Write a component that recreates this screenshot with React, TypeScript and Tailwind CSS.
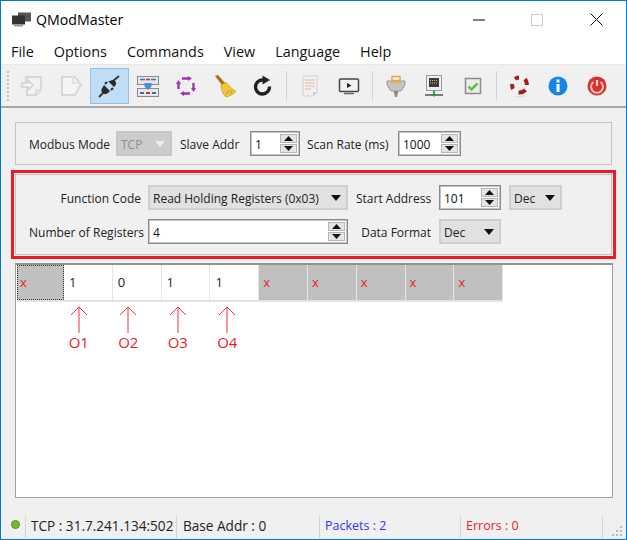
import React from "react";

const Down = ({ c = "#111" }: { c?: string }) => (
  <svg width="10" height="6" viewBox="0 0 10 6"><path d="M0 0h10L5 6z" fill={c} /></svg>
);

function Combo({ text, w, disabled }: { text: string; w: string; disabled?: boolean }) {
  return (
    <div className={`${w} h-[25px] flex items-center justify-between pl-[3px] pr-[5px] border-2 ${disabled ? "border-[#c6c6c6] bg-[#cccccc] text-[#8f8f8f]" : "border-[#cfcfcf] bg-[#e1e1e1] text-[#222]"}`}>
      <span className="whitespace-nowrap pt-[2px]">{text}</span>
      <Down c={disabled ? "#eeeeee" : "#111"} />
    </div>
  );
}

function Spin({ text, w }: { text: string; w: string }) {
  return (
    <div className={`${w} h-[25px] flex items-stretch border border-[#8a8a8a] bg-white text-[#111] shadow-[inset_0_0_0_1px_#c4c4c4]`}>
      <span className="flex-1 pl-[4px] pt-[2px] self-center">{text}</span>
      <div className="w-[17px] flex flex-col m-[2px] ml-0 gap-[1px]">
        <div className="flex-1 bg-[#e4e4e4] border border-[#b5b5b5] flex items-center justify-center">
          <svg width="9" height="5" viewBox="0 0 9 5"><path d="M4.5 0L9 5H0z" fill="#111" /></svg>
        </div>
        <div className="flex-1 bg-[#e4e4e4] border border-[#b5b5b5] flex items-center justify-center">
          <svg width="9" height="5" viewBox="0 0 9 5"><path d="M0 0h9L4.5 5z" fill="#111" /></svg>
        </div>
      </div>
    </div>
  );
}

const I = ({ children }: { children: React.ReactNode }) => (
  <svg width="24" height="24" viewBox="0 0 24 24">{children}</svg>
);

const icons: React.ReactNode[] = [
  <I key="0"><path d="M6 9V3h15v13l-5 5H7v-6" fill="#f2f2f2" stroke="#d8d8d8" strokeWidth="2" /><path d="M16 21v-5h5" fill="#e8e8e8" stroke="#d8d8d8" strokeWidth="1.500" /><path d="M2 9h6V6l5 5-5 5v-3H2z" fill="#f6f6f6" stroke="#cfcfcf" strokeWidth="1.500" /></I>,
  <I key="1"><path d="M3 3h13l6 8-6 10H3z" fill="#f4f4f4" stroke="#d8d8d8" strokeWidth="2" /><path d="M14 3v6h6" fill="none" stroke="#e0e0e0" strokeWidth="1.500" /></I>,
  <I key="2"><path d="M2 23l6-6M16 7l6-5" stroke="#333" strokeWidth="1.800" /><path d="M7 11l6 6-2 2c-2 1.500-4 1.500-5.500 0s-1.500-3.500 0-5.500z" fill="#2b2b2b" /><path d="M11 7l6 6 1-1c1.500-2 1.500-3.500 0-5s-3-1.500-5 0z" fill="#2b2b2b" /><path d="M8 10l2-2M14 16l2-2" stroke="#2b2b2b" strokeWidth="2" /></I>,
  <I key="3"><rect x="1.500" y="2.500" width="21" height="8" fill="#e6e6e6" stroke="#8a8a8a" /><rect x="1.500" y="14.500" width="21" height="8" fill="#e6e6e6" stroke="#8a8a8a" /><path d="M4 5.500h5M15 5.500h5" stroke="#3b6fc4" strokeWidth="1.600" /><path d="M10 5.500h4" stroke="#d8322c" strokeWidth="1.600" /><path d="M4 19h4M16 19h4" stroke="#3b6fc4" strokeWidth="2" /><path d="M10 19h4" stroke="#d8322c" strokeWidth="2" /><path d="M8.500 9h7v3.500l-3.500 3.500-3.500-3.500z" fill="#4a90d9" /></I>,
  <I key="4"><path d="M8 4.500h7M19.500 9v6M16 19.500H9M4.500 15V9" stroke="#a32fb8" strokeWidth="2.400" fill="none" /><path d="M14 2l4 2.500-4 2.500zM22 14l-2.500 4-2.500-4zM10 22l-4-2.500 4-2.500zM2 10l2.500-4 2.500 4z" fill="#a32fb8" /></I>,
  <I key="5"><path d="M2 2l3-1 7 8-3 2z" fill="#b06a1c" /><path d="M8 11l5-2.500c3 3 6 7 10 9-3 3-7 5-10 5.500-3-3-5-7-5-12z" fill="#f0c832" stroke="#c89a1c" strokeWidth="0.800" /><path d="M13 21l3-5M17 20l2-4" stroke="#c89a1c" /></I>,
  <I key="6"><path d="M18.500 12.500A7 7 0 1 1 12 6" fill="none" stroke="#222" strokeWidth="3.400" /><path d="M11.500 1.500l7.500 4.500-7.500 4.500z" fill="#222" /></I>,
  null,
  <I key="8"><path d="M5 2h14v16l-4 4H5z" fill="#f4f0ee" stroke="#dcdcdc" strokeWidth="1.500" /><path d="M7 6h10M7 9h10M7 12h10M7 15h6" stroke="#e8b5ab" /><path d="M15 22l4-4h-4z" fill="#cccccc" /></I>,
  <I key="9"><rect x="2.500" y="5" width="19" height="12.500" rx="1" fill="#f2f2f2" stroke="#444" strokeWidth="1.500" /><path d="M10 9l4.500 2.500L10 14z" fill="#222" /><path d="M7 19.500h10" stroke="#666" strokeWidth="1.500" /></I>,
  null,
  <I key="11"><path d="M3 7h18v4l-4 6h-10l-4-6z" fill="#c4c4c4" stroke="#9a9a9a" /><rect x="8" y="2.500" width="8" height="4" fill="none" stroke="#e4a63c" strokeWidth="1.500" /><path d="M6 8.500h12" stroke="#e8b060" strokeWidth="1.500" /><path d="M9.500 17h5L13 23h-2z" fill="#8d8d8d" /></I>,
  <I key="12"><rect x="4.500" y="1.500" width="15" height="15" fill="#eeeeee" stroke="#9a9a9a" /><rect x="7" y="4" width="10" height="9" fill="#3b3b3b" /><path d="M8 6.500h8M8 9h8" stroke="#d8b65a" strokeDasharray="1 1" /><path d="M3 21h18" stroke="#555" strokeWidth="1.500" /><path d="M12 17v3" stroke="#2f9e3f" strokeWidth="2" /><path d="M9.500 20h5L12 23z" fill="#2f9e3f" /></I>,
  <I key="13"><rect x="4.500" y="4.500" width="15" height="15" fill="#ececec" stroke="#8c8c8c" strokeWidth="1.500" /><path d="M7.500 12.500l3 3L16.500 9.500" fill="none" stroke="#63c23c" strokeWidth="2.500" /></I>,
  null,
  <I key="15"><circle cx="12" cy="11" r="7.500" fill="none" stroke="#f4f4f4" strokeWidth="5" /><path d="M7 5A8 8 0 0 1 11 3.500M17 5a9 9 0 0 1 2 6M17.500 16a9 9 0 0 1-7 2.500M5 15a8 8 0 0 1-.800-5" fill="none" stroke="#a81c1c" strokeWidth="4" /><path d="M6 22.500h12" stroke="#dcdcdc" /></I>,
  <I key="16"><circle cx="12" cy="12" r="9.500" fill="#1585e8" /><rect x="10.500" y="10" width="3" height="8" fill="#fff" /><rect x="10.500" y="5.500" width="3" height="3" fill="#fff" /></I>,
  <I key="17"><circle cx="12" cy="12" r="9.500" fill="#d9302c" /><path d="M8.500 8a6 6 0 1 0 7 0" fill="none" stroke="#f6c8c4" strokeWidth="2" /><path d="M12 6v6" stroke="#f6c8c4" strokeWidth="2.200" /></I>,
];

const Arrow = () => (
  <svg width="18" height="27" viewBox="0 0 18 27"><path d="M9 27V1M1 9l8-8 8 8" fill="none" stroke="#ed1c24" strokeWidth="0.900" /></svg>
);

export default function App() {
  const font = { fontFamily: '"Open Sans", "Noto Sans", sans-serif' };
  return (
    <div style={font} className="w-[627px] h-[540px] flex flex-col border border-[#0078d7] bg-[#f0f0f0] text-[12px] text-[#222] overflow-hidden">
      <div className="h-[37px] shrink-0 bg-white flex items-center pl-[11px]">
        <svg width="19" height="15" viewBox="0 0 19 15">
          <rect x="6" y="0.500" width="13" height="9" fill="#555" />
          <rect x="0" y="3.500" width="13" height="9" fill="#333" />
          <rect x="2" y="12.500" width="9" height="2" fill="#999" />
        </svg>
        <span className="ml-[5px] text-[14.200px] text-black">QModMaster</span>
        <div className="ml-auto flex items-center pr-[23px]">
          <svg width="12" height="2" viewBox="0 0 12 2"><path d="M0 1h12" stroke="#000" /></svg>
          <div className="ml-[46px] w-[12px] h-[12px] border border-[#cccccc]" />
          <svg className="ml-[47px]" width="13" height="13" viewBox="0 0 13 13"><path d="M0.500 0.500l12 12M12.500 0.500l-12 12" stroke="#111" /></svg>
        </div>
      </div>
      <div className="h-[26px] shrink-0 bg-white flex items-center pl-[10px] pt-[2px] gap-[20px] text-[14.400px] text-[#111]">
        <span>File</span><span>Options</span><span>Commands</span><span>View</span><span>Language</span><span>Help</span>
      </div>
      <div className="h-[44px] shrink-0 flex items-center border-t border-[#e8e8e8] border-b-2 border-b-[#a8a8a8]">
        <div className="w-[12px] pl-[6px] flex flex-col gap-[2px] shrink-0">
          {[0, 1, 2, 3, 4, 5, 6, 7].map((i) => <div key={i} className="w-[2px] h-[2px] bg-[#c0c0c0]" />)}
        </div>
        {icons.map((ic, i) => {
          if (ic === null) return <div key={i} className="w-[8.500px] flex justify-center shrink-0"><div className="w-[1px] h-[30px] bg-[#d4d4d4]" /></div>;
          return (
            <div key={i} className={`w-[38.500px] h-[36px] flex items-center justify-center shrink-0 ${i === 2 ? "bg-[#bfddf5] border border-[#8cc2ee]" : ""}`}>{ic}</div>
          );
        })}
      </div>

      <div className="flex-1 flex flex-col px-[10px] pt-[14px] min-h-0">
        <div className="mx-[4px] h-[43px] shrink-0 border border-[#c4c4c4] flex items-center pl-[13px]">
          <span className="w-[87px] pt-[2px]">Modbus Mode</span>
          <Combo text="TCP" w="w-[56px]" disabled />
          <span className="ml-[8px] w-[70px] pt-[2px]">Slave Addr</span>
          <Spin text="1" w="w-[50px]" />
          <span className="ml-[7px] w-[91px] pt-[2px]">Scan Rate (ms)</span>
          <Spin text="1000" w="w-[63px]" />
        </div>
        <div className="mt-[5px] h-[89px] shrink-0 border-[3px] border-[#ed1c24] p-[1px]">
          <div className="h-full border border-[#c4c4c4] pl-[13px] pt-[10px] grid grid-cols-[119px_208px_83px_70px_53px] grid-rows-[25px_25px] gap-y-[9px] items-center">
            <span className="text-right pr-[7px] pt-[2px] whitespace-nowrap">Function Code</span>
            <Combo text="Read Holding Registers (0x03)" w="w-[200px]" />
            <span className="text-right pr-[8px] pt-[2px] whitespace-nowrap">Start Address</span>
            <Spin text="101" w="w-[62px]" />
            <Combo text="Dec" w="w-[53px]" />
            <span className="text-right pr-[7px] pt-[2px] whitespace-nowrap">Number of Registers</span>
            <Spin text="4" w="w-[200px]" />
            <span className="text-right pr-[8px] pt-[2px] whitespace-nowrap">Data Format</span>
            <Combo text="Dec" w="w-[62px]" />
          </div>
        </div>
        <div className="mt-[4px] ml-[4px] mr-[3px] flex-1 min-h-0 bg-white border border-[#a0a0a0] border-t-2 border-t-[#8f959b] pl-[1px] text-[13px]">
          <div className="flex h-[37px] border-b-2 border-[#e4e4e4] w-fit">
            <div className="w-[47px] bg-[#c0c0c0] border border-dotted border-[#333] text-[#ed1c24] flex items-center pl-[2px]">x</div>
            {["1", "0", "1", "1"].map((v, i) => (
              <div key={i} className="w-[48.800px] border-r border-[#e4e4e4] pl-[5px] flex items-center text-[#222]">{v}</div>
            ))}
            {[0, 1, 2, 3, 4].map((i) => (
              <div key={i} className="w-[48.800px] bg-[#c0c0c0] border-r border-[#e4e4e4] pl-[4px] flex items-center text-[#ed1c24]">x</div>
            ))}
          </div>
          <div className="flex ml-[37px] mt-[4px]">
            {["O1", "O2", "O3", "O4"].map((t) => (
              <div key={t} className="w-[49.500px] flex flex-col items-center text-[#ed1c24] text-[15px] leading-[18px]">
                <Arrow />
                <span>{t}</span>
              </div>
            ))}
          </div>
        </div>
      </div>

      <div className="h-[41px] shrink-0 flex items-center pt-[16px] text-[#222]">
        <div className="w-[24px] flex justify-center pl-[4px] mb-[4px]">
          <div className="w-[9px] h-[9px] rounded-full bg-[#79b82a] border border-[#5f8f20]" />
        </div>
        <div className="h-[22px] w-[151px] border-l border-[#d4d4d4] pl-[5px] flex items-center text-[13.600px] whitespace-nowrap">TCP : 31.7.241.134:502</div>
        <div className="h-[22px] w-[143px] border-l border-[#d4d4d4] pl-[6px] flex items-center text-[13.600px] whitespace-nowrap">Base Addr : 0</div>
        <div className="h-[22px] w-[141px] border-l border-[#d4d4d4] pl-[5px] flex items-center text-[12.500px] text-[#3333ff] whitespace-nowrap">Packets : 2</div>
        <div className="h-[22px] w-[142px] border-l border-[#d4d4d4] pl-[5px] flex items-center text-[12.500px] text-[#ed1c24] whitespace-nowrap">Errors : 0</div>
        <div className="h-[22px] flex-1 border-l border-[#d4d4d4] flex items-end justify-end pr-[3px]">
          <svg width="12" height="12" viewBox="0 0 12 12"><path d="M9 0h2v2H9zM5 4h2v2H5zM9 4h2v2H9zM1 8h2v2H1zM5 8h2v2H5zM9 8h2v2H9z" fill="#bbb" /></svg>
        </div>
      </div>
    </div>
  );
}
